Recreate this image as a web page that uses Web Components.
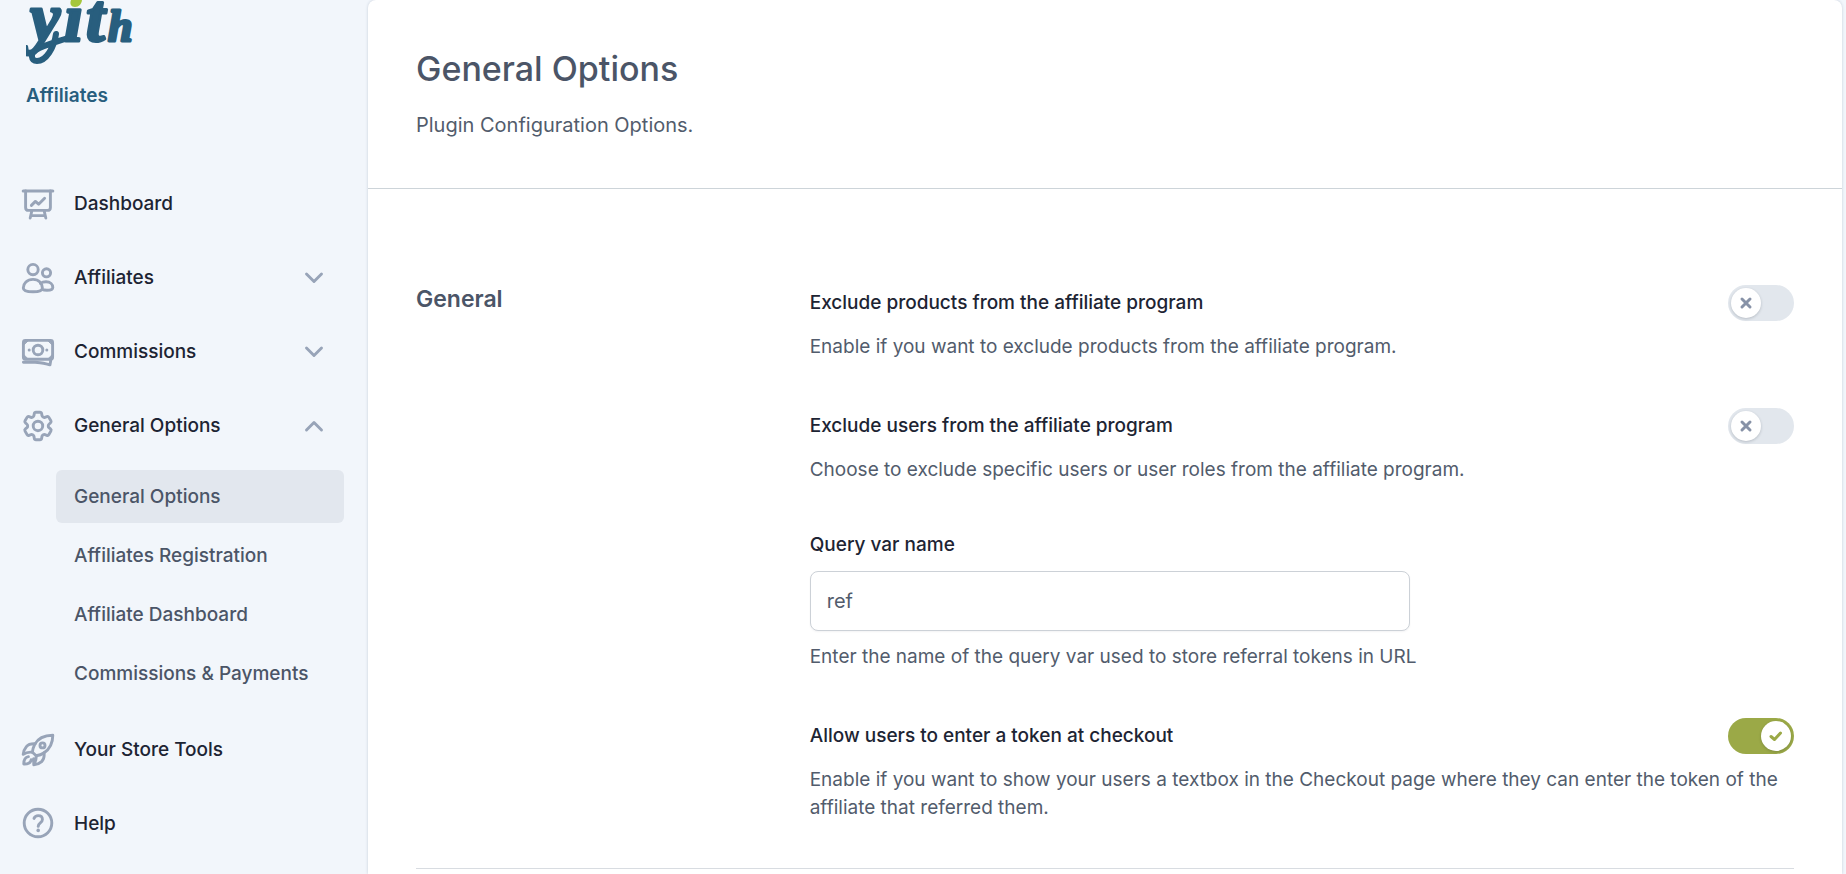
<!DOCTYPE html>
<html lang="en">
<head>
<meta charset="utf-8">
<title>General Options – YITH Affiliates</title>
<style>
  body {
    margin: 0;
    background: #f2f6fb;
    color: #1d2433;
    font: 400 19px/28px Inter, "Noto Sans", sans-serif;
    --title: #4b5567;
    --muted: #525c6c;
    --icon: #98a4b8;
    --line: #cdd4d9;
  }
</style>
</head>
<body>
<yith-panel>
  <yith-sidebar slot="sidebar">
    <nav-item icon="dashboard" label="Dashboard"></nav-item>
    <nav-item icon="users" label="Affiliates" state="closed"></nav-item>
    <nav-item icon="money" label="Commissions" state="closed"></nav-item>
    <nav-item icon="gear" label="General Options" state="open">
      <nav-subitem label="General Options" current></nav-subitem>
      <nav-subitem label="Affiliates Registration"></nav-subitem>
      <nav-subitem label="Affiliate Dashboard"></nav-subitem>
      <nav-subitem label="Commissions &amp; Payments"></nav-subitem>
    </nav-item>
    <nav-item icon="rocket" label="Your Store Tools"></nav-item>
    <nav-item icon="help" label="Help"></nav-item>
  </yith-sidebar>
  <page-header>
    General Options
    <span slot="description">Plugin Configuration Options.</span>
  </page-header>
  <options-section heading="General">
    <toggle-option label="Exclude products from the affiliate program">Enable if you want to exclude products from the affiliate program.</toggle-option>
    <toggle-option label="Exclude users from the affiliate program">Choose to exclude specific users or user roles from the affiliate program.</toggle-option>
    <text-option label="Query var name" value="ref">Enter the name of the query var used to store referral tokens in URL</text-option>
    <toggle-option label="Allow users to enter a token at checkout" checked>Enable if you want to show your users a textbox in the Checkout page where they can enter the token of the affiliate that referred them.</toggle-option>
  </options-section>
</yith-panel>

<script>
const ICONS = {
  dashboard: `<path d="M1.2 3H30.8" stroke-width="3"/><path d="M3.6 3V19.4Q3.6 22.4 6.6 22.4H25.4Q28.4 22.4 28.4 19.4V3M9.8 23 8.2 30M22.2 23 23.8 30M9 27.6H23M9.4 17.4 13.4 13.4 16.6 16.2 22.6 10.2"/>`,
  users: `<circle cx="11" cy="7.6" r="5.2"/><circle cx="24.5" cy="10.8" r="4.1"/><path d="M11 17.4C5 17.4 1.3 21.6 1.3 26 1.3 28.6 5 29.8 11 29.8S20.4 28.6 20.4 26C20.4 21.6 17 17.4 11 17.4ZM18.4 21.4C20 20.3 22 19.8 24 19.8 28.4 19.8 30.8 22.6 30.8 25.4 30.8 27.4 28.4 28.2 25 28.2 23.2 28.2 21.4 28 20 27.4"/>`,
  money: `<rect x="1.4" y="4.4" width="29.2" height="18.8" rx="2"/><circle cx="16" cy="14" r="4.8"/><path d="M1.4 26.2H13C18 26.2 22 27.4 28 28.8L28.8 24"/><path d="M2 8.4V5H5.6ZM30 8.4V5H26.4ZM2 19.2V22.8H5.6ZM30 19.2V22.8H26.4Z" stroke-width="1" fill="currentColor"/><circle cx="7.2" cy="14" r="1.5" fill="currentColor" stroke="none"/><circle cx="24.8" cy="14" r="1.5" fill="currentColor" stroke="none"/>`,
  gear: `<g transform="translate(-2.4 -2.4) scale(1.53)" stroke-width="1.9"><path d="M9.594 3.94c.09-.542.56-.94 1.11-.94h2.593c.55 0 1.02.398 1.11.94l.213 1.281c.063.374.313.686.645.87.074.04.147.083.22.127.325.196.72.257 1.075.124l1.217-.456a1.125 1.125 0 0 1 1.37.49l1.296 2.247a1.125 1.125 0 0 1-.26 1.431l-1.003.827c-.293.241-.438.613-.43.992a7.723 7.723 0 0 1 0 .255c-.008.378.137.75.43.991l1.004.827c.424.35.534.955.26 1.43l-1.298 2.247a1.125 1.125 0 0 1-1.369.491l-1.217-.456c-.355-.133-.75-.072-1.076.124a6.47 6.47 0 0 1-.22.128c-.331.183-.581.495-.644.869l-.213 1.281c-.09.543-.56.94-1.11.94h-2.594c-.55 0-1.019-.398-1.11-.94l-.213-1.281c-.062-.374-.312-.686-.644-.87a6.52 6.52 0 0 1-.22-.127c-.325-.196-.72-.257-1.076-.124l-1.217.456a1.125 1.125 0 0 1-1.369-.49l-1.297-2.247a1.125 1.125 0 0 1 .26-1.431l1.004-.827c.292-.24.437-.613.43-.991a6.932 6.932 0 0 1 0-.255c.007-.38-.138-.751-.43-.992l-1.004-.827a1.125 1.125 0 0 1-.26-1.43l1.297-2.247a1.125 1.125 0 0 1 1.37-.491l1.216.456c.356.133.751.072 1.076-.124.072-.044.146-.086.22-.128.332-.183.582-.495.644-.869l.214-1.28Z"/><circle cx="12" cy="12" r="3.1"/></g>`,
  rocket: `<path d="M30.8 1.2C21.5 1.2 15.8 4.4 12.6 10.6 11.2 13.4 10.6 15.8 10.4 18.2L14.2 21.8C16.8 21.4 19.2 20.8 21.8 19 27.8 15 30.8 10 30.8 1.2Z"/><circle cx="20.5" cy="11.4" r="2.5"/><path d="M13.2 9.8C9 9.6 6.2 10.4 4.4 12.6 2.4 15 1.4 17.4 1.2 20.4 4 18.4 7 17.8 10.4 18.2M22 18.8C22.6 22.6 21.8 25.4 19.6 27.6 17.4 29.6 14.8 30.6 11.8 30.8 13.6 27.8 14.4 25 14.2 21.8M11.6 24.6 11.8 30.8M6.4 22.6C2.4 23.2 1.8 26 1.8 30 6 30.2 8.800 29.6 9.2 25.6"/>`,
  help: `<circle cx="16" cy="15" r="13.8"/><path d="M12 10.4C12.8 8.4 14.2 7.6 16.2 7.6 18.8 7.6 20.4 9.2 20.4 11.4 20.4 15 16.2 14.8 16.2 18.4"/><circle cx="16.2" cy="22.4" r="1.8" fill="currentColor" stroke="none"/>`
};

const define = (name, render) => customElements.define(name, class extends HTMLElement {
  constructor() {
    super();
    this.attachShadow({ mode: "open" });
  }
  connectedCallback() {
    const template = document.createElement("template");
    template.innerHTML = render(this);
    this.shadowRoot.replaceChildren(template.content.cloneNode(true));
  }
});
const attr = (el, name) => (el.getAttribute(name) || "").replace(/&/g, "&amp;").replace(/</g, "&lt;").replace(/"/g, "&quot;");

define("yith-panel", () => `
  <style>
    :host { display: grid; grid-template-columns: 368px minmax(0, 1fr); min-height: 100vh; padding-right: 4px; }
    main { background: #fff; border-radius: 8px 8px 0 0; box-shadow: 0 0 3px #c3ccd8; }
  </style>
  <slot name="sidebar"></slot>
  <main><slot></slot></main>`);

define("yith-sidebar", () => `
  <style>
    :host { display: block; }
    header { padding-left: 26px; color: #285e7e; }
    svg { display: block; }
    svg text { font-family: "Liberation Serif", serif; font-style: italic; font-weight: 700; fill: currentColor; stroke: currentColor; stroke-width: 3; stroke-linejoin: round; }
    .product { margin: 0; padding: 14px 0 57px; font-weight: 600; }
  </style>
  <header>
    <svg width="110" height="68" viewBox="0 0 110 68" role="img" aria-label="yith">
      <text y="41"><tspan x="4" font-size="68">y</tspan><tspan x="38" font-size="68">i</tspan><tspan x="60" font-size="68">t</tspan><tspan x="82" font-size="44">h</tspan></text>
      <path d="M30 34C28 48 20 61 11 61 5 61 4 54 10 50 16 46 27 43 42 38" fill="none" stroke="currentColor" stroke-width="6" stroke-linecap="round"/>
      <path d="M41 0H60V8H41Z" fill="#f2f6fb"/>
      <path d="M45 0H56C55.5 4 53 7 49 7 45 7 43.5 4 45 0Z" fill="#a5c73c"/>
    </svg>
    <p class="product">Affiliates</p>
  </header>
  <nav aria-label="Affiliates"><slot></slot></nav>`);

define("nav-item", el => `
  <style>
    :host { display: block; font-weight: 500; }
    .row { box-sizing: border-box; display: flex; align-items: center; gap: 20px; width: 100%; height: 74px; margin: 0; padding: 0 44px 0 22px; border: 0; background: none; color: inherit; font: inherit; text-align: left; text-decoration: none; cursor: pointer; }
    svg { flex: none; fill: none; stroke: currentColor; color: var(--icon); stroke-width: 2.9; stroke-linecap: round; stroke-linejoin: round; overflow: visible; }
    .label { flex: 1; }
    .sub { display: grid; gap: 6px; padding: 7px 24px 13px 56px; }
  </style>
  ${(() => {
    const state = el.getAttribute("state");
    const body = `<svg width="32" height="32" viewBox="0 0 32 32" aria-hidden="true">${ICONS[el.getAttribute("icon")]}</svg><span class="label">${attr(el, "label")}</span>`;
    if (!state) return `<a class="row" href="#">${body}</a>`;
    const open = state === "open";
    const chevron = `<svg width="20" height="12" viewBox="0 0 20 12" aria-hidden="true"><path d="${open ? "M2.5 10 10 2.5 17.5 10" : "M2.5 2 10 9.5 17.5 2"}"/></svg>`;
    return `<button class="row" type="button" aria-expanded="${open}">${body}${chevron}</button>${open ? '<div class="sub"><slot></slot></div>' : ""}`;
  })()}`);

define("nav-subitem", el => `
  <style>
    :host { display: block; color: var(--title); }
    a { display: block; padding: 13px 18px 12px; border-radius: 6px; color: inherit; text-decoration: none; white-space: nowrap; }
    :host([current]) a { background: #e2e7ee; }
  </style>
  <a href="#"${el.hasAttribute("current") ? ' aria-current="page"' : ""}>${attr(el, "label")}</a>`);

define("page-header", () => `
  <style>
    :host { display: block; padding: 47px 48px 49px; border-bottom: 1px solid var(--line); }
    h1 { margin: 0 0 20px; color: var(--title); font-size: 34px; font-weight: 500; line-height: 44px; }
    p { margin: 0; color: var(--muted); font-size: 20px; }
  </style>
  <h1><slot></slot></h1>
  <p><slot name="description"></slot></p>`);

define("options-section", el => `
  <style>
    :host { display: block; padding: 96px 48px 0; }
    section { display: grid; grid-template-columns: 2fr 5fr; padding-bottom: 46px; border-bottom: 1px solid #d8dce1; }
    h2 { margin: 0; color: var(--title); font-size: 23px; font-weight: 600; line-height: 28px; }
    .options { display: grid; gap: 47px; }
  </style>
  <section>
    <h2>${attr(el, "heading")}</h2>
    <div class="options"><slot></slot></div>
  </section>`);

define("toggle-option", el => `
  <style>
    :host { display: block; }
    .head { display: flex; align-items: center; justify-content: space-between; height: 36px; margin-bottom: 12px; }
    label { font-weight: 500; }
    .switch { display: grid; }
    .switch > * { grid-area: 1 / 1; }
    input { appearance: none; box-sizing: border-box; display: flex; width: 66px; height: 36px; margin: 0; padding: 3px; border-radius: 18px; background: #e2e7ed; cursor: pointer; }
    input::before { content: ""; width: 30px; height: 30px; border-radius: 50%; background: #fff; box-shadow: 0 1px 3px #0f172a33; }
    input:checked { justify-content: flex-end; background: #9ba947; }
    svg { align-self: center; margin: 0 9px; z-index: 1; pointer-events: none; fill: none; stroke-linecap: round; stroke-linejoin: round; stroke-width: 3; }
    .off { stroke: #8792a7; }
    .on { display: none; justify-self: end; stroke: #9ba947; }
    input:checked ~ .off { display: none; }
    input:checked ~ .on { display: block; }
    p { margin: 0; color: var(--muted); }
  </style>
  <div class="head">
    <label for="field">${attr(el, "label")}</label>
    <span class="switch">
      <input id="field" type="checkbox" role="switch" aria-describedby="hint"${el.hasAttribute("checked") ? " checked" : ""}>
      <svg class="off" width="18" height="18" viewBox="0 0 18 18" aria-hidden="true"><path d="M5 5 13 13M13 5 5 13"/></svg>
      <svg class="on" width="18" height="18" viewBox="0 0 18 18" aria-hidden="true"><path d="M4 9.5 7.5 12.5 13.5 6"/></svg>
    </span>
  </div>
  <p id="hint"><slot></slot></p>`);

define("text-option", el => `
  <style>
    :host { display: block; }
    label { display: block; margin-bottom: 12px; font-weight: 500; }
    input { box-sizing: border-box; display: block; width: 100%; max-width: 600px; height: 60px; margin: 0 0 12px; padding: 0 16px; border: 1px solid #ccd1d7; border-radius: 8px; background: #fff; box-shadow: 0 1px 2px #0f172a0d; color: var(--muted); font: inherit; font-size: 20px; outline: 0; }
    p { margin: 0; color: var(--muted); }
  </style>
  <label for="field">${attr(el, "label")}</label>
  <input id="field" type="text" aria-describedby="hint" value="${attr(el, "value")}">
  <p id="hint"><slot></slot></p>`);
</script>
</body>
</html>
